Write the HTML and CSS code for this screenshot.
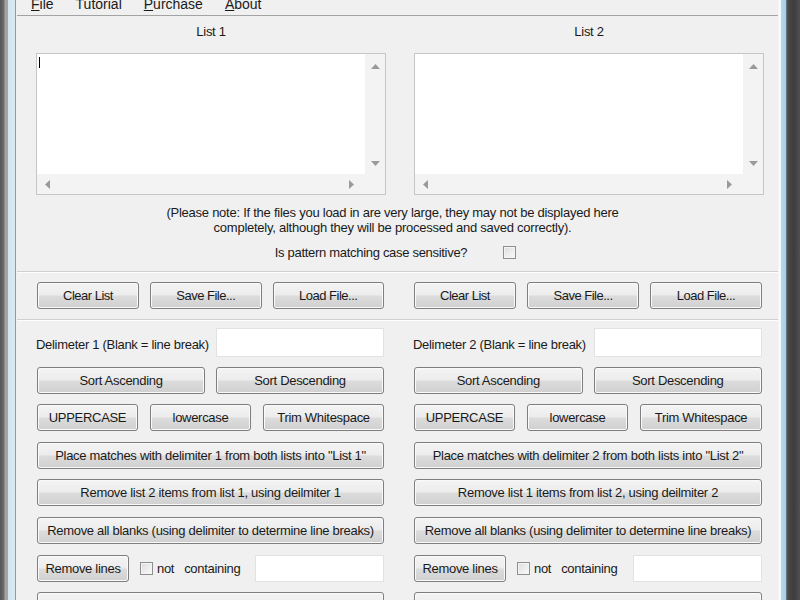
FILE: index.html
```html
<!DOCTYPE html>
<html lang="en">
  <head>
    <meta charset="UTF-8" />
    <title>List Compare</title>
    <link rel="stylesheet" href="styles.css">
  </head>
  <body>
    <div class="window">
      <div class="frame-left"></div>
      <div class="client">
        <div class="menubar">
          <span class="menu-item"><u>F</u>ile</span>
          <span class="menu-item">Tutorial</span>
          <span class="menu-item"><u>P</u>urchase</span>
          <span class="menu-item"><u>A</u>bout</span>
        </div>

        <div class="lists">
          <div class="list-col">
            <div class="list-label">List 1</div>
            <div class="listbox">
              <div class="list-text"><span class="caret"></span></div>
              <div class="vscroll">
                <svg width="9" height="5" viewBox="0 0 9 5"><polygon points="0,5 4.5,0 9,5" fill="#9a9a9a" /></svg>
                <svg width="9" height="5" viewBox="0 0 9 5"><polygon points="0,0 4.5,5 9,0" fill="#9a9a9a" /></svg>
              </div>
              <div class="hscroll">
                <svg width="5" height="9" viewBox="0 0 5 9"><polygon points="5,0 0,4.5 5,9" fill="#9a9a9a" /></svg>
                <svg width="5" height="9" viewBox="0 0 5 9"><polygon points="0,0 5,4.5 0,9" fill="#9a9a9a" /></svg>
              </div>
              <div class="corner"></div>
            </div>
          </div>
          <div class="list-col">
            <div class="list-label">List 2</div>
            <div class="listbox">
              <div class="list-text"></div>
              <div class="vscroll">
                <svg width="9" height="5" viewBox="0 0 9 5"><polygon points="0,5 4.5,0 9,5" fill="#9a9a9a" /></svg>
                <svg width="9" height="5" viewBox="0 0 9 5"><polygon points="0,0 4.5,5 9,0" fill="#9a9a9a" /></svg>
              </div>
              <div class="hscroll">
                <svg width="5" height="9" viewBox="0 0 5 9"><polygon points="5,0 0,4.5 5,9" fill="#9a9a9a" /></svg>
                <svg width="5" height="9" viewBox="0 0 5 9"><polygon points="0,0 5,4.5 0,9" fill="#9a9a9a" /></svg>
              </div>
              <div class="corner"></div>
            </div>
          </div>
        </div>

        <p class="note">
          (Please note: If the files you load in are very large, they may not be displayed here<br />
          completely, although they will be processed and saved correctly).
        </p>

        <div class="case-row">
          <span>Is pattern matching case sensitive?</span>
          <span class="checkbox"></span>
        </div>

        <div class="separator"></div>

        <div class="file-rows">
          <div class="file-row">
            <button>Clear List</button>
            <button>Save File...</button>
            <button>Load File...</button>
          </div>
          <div class="file-row">
            <button>Clear List</button>
            <button>Save File...</button>
            <button>Load File...</button>
          </div>
        </div>

        <div class="separator"></div>

        <div class="tools">
          <div class="tool-col">
            <div class="delim-row">
              <label>Delimeter 1 (Blank = line break)</label>
              <input type="text" class="field" />
            </div>
            <div class="sort-row">
              <button>Sort Ascending</button>
              <button>Sort Descending</button>
            </div>
            <div class="case-buttons">
              <button>UPPERCASE</button>
              <button>lowercase</button>
              <button>Trim Whitespace</button>
            </div>
            <button>Place matches with delimiter 1 from both lists into "List 1"</button>
            <button>Remove list 2 items from list 1, using deilmiter 1</button>
            <button>Remove all blanks (using delimiter to determine line breaks)</button>
            <div class="lines-row">
              <button class="btn-lines">Remove lines</button>
              <span class="checkbox"></span>
              <span class="word-not">not</span>
              <span class="word-containing">containing</span>
              <input type="text" class="field" />
            </div>
            <button>Remove Duplicates (using delimiter)</button>
          </div>

          <div class="tool-col">
            <div class="delim-row">
              <label>Delimeter 2 (Blank = line break)</label>
              <input type="text" class="field" />
            </div>
            <div class="sort-row">
              <button>Sort Ascending</button>
              <button>Sort Descending</button>
            </div>
            <div class="case-buttons">
              <button>UPPERCASE</button>
              <button>lowercase</button>
              <button>Trim Whitespace</button>
            </div>
            <button>Place matches with delimiter 2 from both lists into "List 2"</button>
            <button>Remove list 1 items from list 2, using deilmiter 2</button>
            <button>Remove all blanks (using delimiter to determine line breaks)</button>
            <div class="lines-row">
              <button class="btn-lines">Remove lines</button>
              <span class="checkbox"></span>
              <span class="word-not">not</span>
              <span class="word-containing">containing</span>
              <input type="text" class="field" />
            </div>
            <button>Remove Duplicates (using delimiter)</button>
          </div>
        </div>
      </div>
      <div class="frame-right"></div>
    </div>
  </body>
</html>
```

FILE: styles.css
```css
body {
  margin: 0;
  height: 600px;
  overflow: hidden;
  font-family: "Liberation Sans", Arial, sans-serif;
  font-size: 13px;
  letter-spacing: -0.3px;
  color: #1a1a1a;
  background-color: #f0f0f0;
}

.window {
  display: flex;
  height: 600px;
}

.frame-left {
  width: 17px;
  flex: none;
  background: linear-gradient(
    to right,
    #555 0,
    #6e6e6e 4px,
    #a4a4a4 5px,
    #a4a4a4 8px,
    #d3e4ef 8px,
    #dce9f2 15px,
    #8e9aa3 15px,
    #8e9aa3 16px,
    #f0f0f0 16px
  );
}

.frame-right {
  width: 22px;
  flex: none;
  background: linear-gradient(
    to right,
    #f6f8f9 0,
    #f6f8f9 3px,
    #b4d9ee 3px,
    #a3cfe8 8px,
    #6d7e88 8px,
    #4a4a4a 10px,
    #3c3c3c 16px,
    #505050 22px
  );
}

.client {
  flex: 1;
  min-width: 0;
  background-color: #f0f0f0;
}

/* menu */
.menubar {
  display: flex;
  gap: 22px;
  margin-top: -8px;
  padding: 4px 14px 3px;
  line-height: 16px;
  font-size: 14px;
  letter-spacing: 0;
  border-bottom: 1px solid #a3a3a3;
}

.menu-item u {
  text-decoration-thickness: 1px;
}

/* lists */
.lists {
  display: grid;
  grid-template-columns: 350px 350px;
  column-gap: 28px;
  padding: 8px 0 0 19px;
}

.list-label {
  text-align: center;
  line-height: 16px;
  margin-bottom: 13px;
}

.listbox {
  display: grid;
  grid-template-columns: 1fr 20px;
  grid-template-rows: 120px 20px;
  border: 1px solid #c6c6c6;
  background-color: #f3f3f3;
}

.list-text {
  background-color: #fff;
  position: relative;
}

.caret {
  position: absolute;
  left: 2px;
  top: 3px;
  width: 1px;
  height: 11px;
  background-color: #000;
}

.vscroll {
  display: flex;
  flex-direction: column;
  justify-content: space-between;
  align-items: center;
  padding: 10px 0 8px;
}

.hscroll {
  display: flex;
  justify-content: space-between;
  align-items: center;
  padding: 0 11px 0 8px;
}

.note {
  margin: 10px 0 0;
  padding-right: 10px;
  text-align: center;
  line-height: 15px;
  letter-spacing: -0.25px;
}

.case-row {
  display: flex;
  justify-content: center;
  align-items: center;
  gap: 36px;
  margin-top: 10px;
  height: 15px;
  padding-right: 4px;
}

.checkbox {
  display: inline-block;
  width: 11px;
  height: 11px;
  border: 1px solid #8e8f8f;
  background: linear-gradient(135deg, #dcdcdc, #fbfbfb);
  box-shadow: inset 0 0 0 1px #f4f4f4;
}

.separator {
  margin-top: 11px;
  border-top: 1px solid #d0d0d0;
  border-bottom: 1px solid #fdfdfd;
}

/* buttons */
button {
  height: 27px;
  padding: 0 2px;
  font-family: "Liberation Sans", Arial, sans-serif;
  font-size: 13px;
  letter-spacing: -0.3px;
  color: #1a1a1a;
  border: 1px solid #7e7e7e;
  border-radius: 3px;
  background: linear-gradient(#f4f4f4 0%, #ececec 48%, #dcdcdc 52%, #d0d0d0 100%);
  box-shadow: inset 0 0 0 1px #fafafa;
  white-space: nowrap;
  overflow: hidden;
}

.file-rows {
  display: grid;
  grid-template-columns: 347px 348px;
  column-gap: 30px;
  padding: 9px 0 0 20px;
}

.file-row {
  display: grid;
  grid-template-columns: 102px 1fr 1fr;
  column-gap: 11px;
}

.file-row button {
  letter-spacing: -0.5px;
}

.file-rows + .separator {
  margin-top: 10px;
}

.tools {
  display: grid;
  grid-template-columns: 347px 348px;
  column-gap: 30px;
  padding: 7px 0 0 20px;
}

.tool-col {
  display: flex;
  flex-direction: column;
  gap: 10.6px;
}

.delim-row {
  display: flex;
  align-items: center;
  justify-content: space-between;
  height: 29px;
  margin-bottom: -1px;
}

.delim-row label {
  margin-left: -1px;
  padding-top: 4px;
  white-space: nowrap;
}

.field {
  box-sizing: border-box;
  width: 168px;
  height: 29px;
  border: 1px solid #e2e2e2;
  background-color: #fff;
  margin: 0;
}

.sort-row {
  display: grid;
  grid-template-columns: 1fr 1fr;
  column-gap: 11px;
}

.case-buttons {
  display: grid;
  grid-template-columns: 101px 101px 1fr;
  column-gap: 12px;
}

.lines-row {
  display: flex;
  align-items: center;
}

.btn-lines {
  width: 92px;
  padding: 0;
}

.lines-row .checkbox {
  margin-left: 11px;
}

.word-not {
  margin-left: 4px;
}

.word-containing {
  margin-left: 10px;
}

.lines-row .field {
  width: 129px;
  height: 27px;
  margin-left: auto;
}
```
